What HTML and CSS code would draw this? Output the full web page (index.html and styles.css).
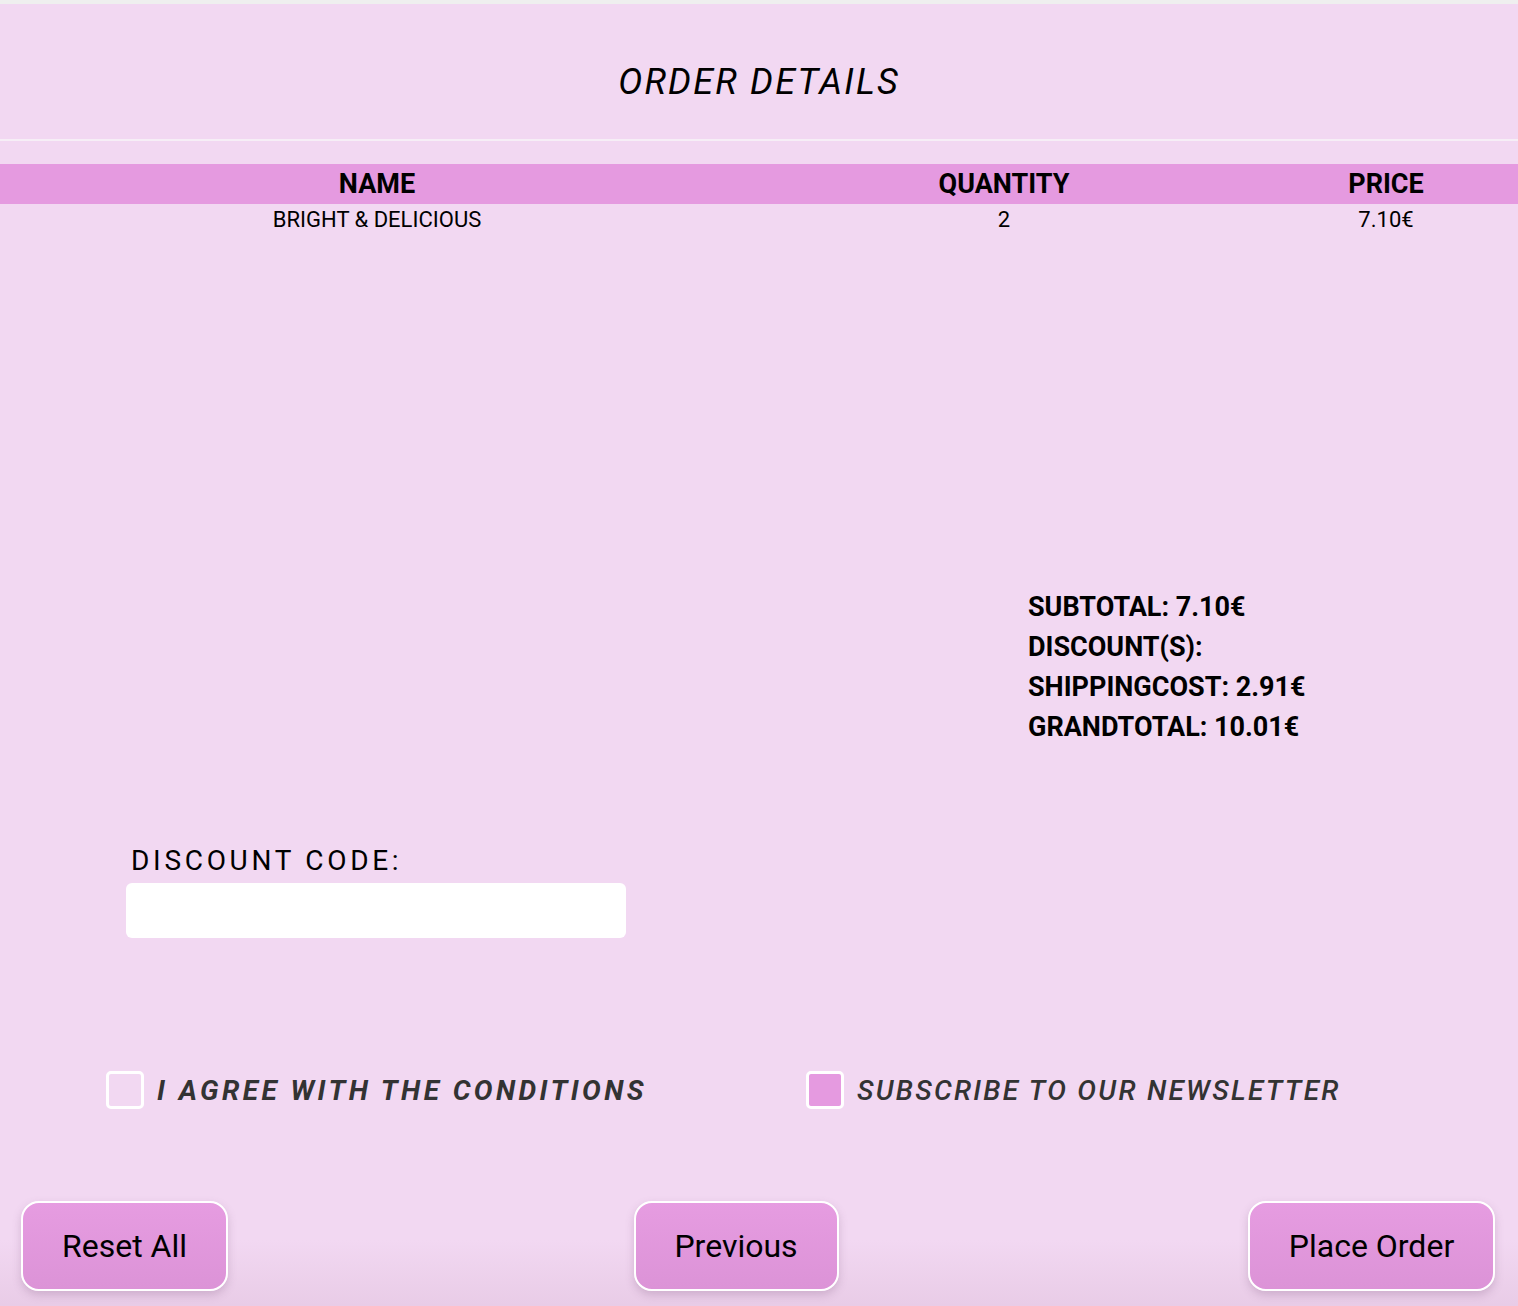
FILE: index.html
```html
<!DOCTYPE html>
<html lang="en">
<head>
<meta charset="utf-8">
<title>Order Details</title>
<link rel="stylesheet" href="styles.css">
</head>
<body>
<div class="page">
  <header class="header">
    <h1 class="title">ORDER DETAILS</h1>
  </header>

  <div class="table">
    <div class="row head">
      <div class="cell">NAME</div>
      <div class="cell">QUANTITY</div>
      <div class="cell">PRICE</div>
    </div>
    <div class="row item">
      <div class="cell">BRIGHT &amp; DELICIOUS</div>
      <div class="cell">2</div>
      <div class="cell">7.10€</div>
    </div>
  </div>

  <div class="summary">
    <div class="sum-line">SUBTOTAL: 7.10€</div>
    <div class="sum-line">DISCOUNT(S):</div>
    <div class="sum-line">SHIPPINGCOST: 2.91€</div>
    <div class="sum-line">GRANDTOTAL: 10.01€</div>
  </div>

  <div class="discount">
    <label class="discount-label" for="code">DISCOUNT CODE:</label>
    <input class="discount-input" id="code" type="text">
  </div>

  <div class="checks">
    <label class="check check-agree">
      <span class="box"></span>
      <span class="check-text">I AGREE WITH THE CONDITIONS</span>
    </label>
    <label class="check check-news">
      <span class="box filled"></span>
      <span class="check-text">SUBSCRIBE TO OUR NEWSLETTER</span>
    </label>
  </div>

  <div class="actions">
    <button class="btn btn-reset">Reset All</button>
    <button class="btn btn-prev">Previous</button>
    <button class="btn btn-order">Place Order</button>
  </div>
</div>
</body>
</html>
```

FILE: styles.css
```css
html {
  background: #efefef;
}
body {
  margin: 0;
  padding-top: 4px;
  font-family: Roboto, "Liberation Sans", Arial, sans-serif;
  color: #000;
}
.page {
  background: linear-gradient(to bottom, #f2d8f2 0, #f2d8f2 1236px, #e8cbe6 1306px);
  min-height: 1302px;
  display: flex;
  flex-direction: column;
}
.header {
  height: 137px;
  border-bottom: 2px solid #f6eef6;
  display: flex;
  justify-content: center;
  box-sizing: border-box;
}
.title {
  margin: 0;
  padding-top: 57px;
  font-size: 36px;
  line-height: 42px;
  font-weight: 400;
  font-style: italic;
  letter-spacing: 2.2px;
}
.table {
  margin-top: 23px;
}
.row {
  display: grid;
  grid-template-columns: 754px 500px 264px;
  text-align: center;
}
.head {
  background: #e59ae0;
  height: 40px;
  line-height: 40px;
  font-size: 27px;
  font-weight: 700;
}
.item {
  height: 32px;
  line-height: 32px;
  font-size: 22px;
}
.summary {
  margin-top: 351px;
  margin-left: 1028px;
}
.sum-line {
  font-size: 27px;
  line-height: 40px;
  font-weight: 700;
}
.discount {
  margin-top: 98px;
  margin-left: 126px;
  display: flex;
  flex-direction: column;
  align-items: flex-start;
}
.discount-label {
  margin-left: 5px;
  font-size: 28px;
  line-height: 32px;
  letter-spacing: 3.7px;
}
.discount-input {
  margin-top: 6px;
  width: 500px;
  height: 55px;
  box-sizing: border-box;
  border: none;
  border-radius: 6px;
  background: #fff;
  outline: none;
}
.checks {
  margin-top: 133px;
  display: flex;
}
.check {
  display: flex;
  align-items: center;
  gap: 13px;
}
.check-agree {
  margin-left: 106px;
  width: 700px;
}
.box {
  width: 38px;
  height: 38px;
  box-sizing: border-box;
  border: 3px solid #fff;
  border-radius: 5px;
}
.box.filled {
  background: #e59ae0;
}
.check-text {
  font-size: 28px;
  font-style: italic;
  color: #333;
}
.check-agree .check-text {
  font-weight: 700;
  letter-spacing: 3.4px;
}
.check-news .check-text {
  font-weight: 500;
  letter-spacing: 2.27px;
}
.actions {
  margin-top: 92px;
  padding: 0 23px 0 21px;
  display: flex;
  justify-content: space-between;
}
.btn {
  height: 90px;
  border: 2px solid #fff;
  border-radius: 18px;
  background: linear-gradient(to bottom, #e69ce1, #dc93d7);
  box-shadow: 0 4px 8px rgba(120, 80, 120, 0.25);
  font-family: Roboto, "Liberation Sans", Arial, sans-serif;
  font-size: 32px;
  color: #000;
  padding: 0;
}
.btn-reset { width: 207px; }
.btn-prev { width: 205px; margin-right: 4px; }
.btn-order { width: 247px; }
```
